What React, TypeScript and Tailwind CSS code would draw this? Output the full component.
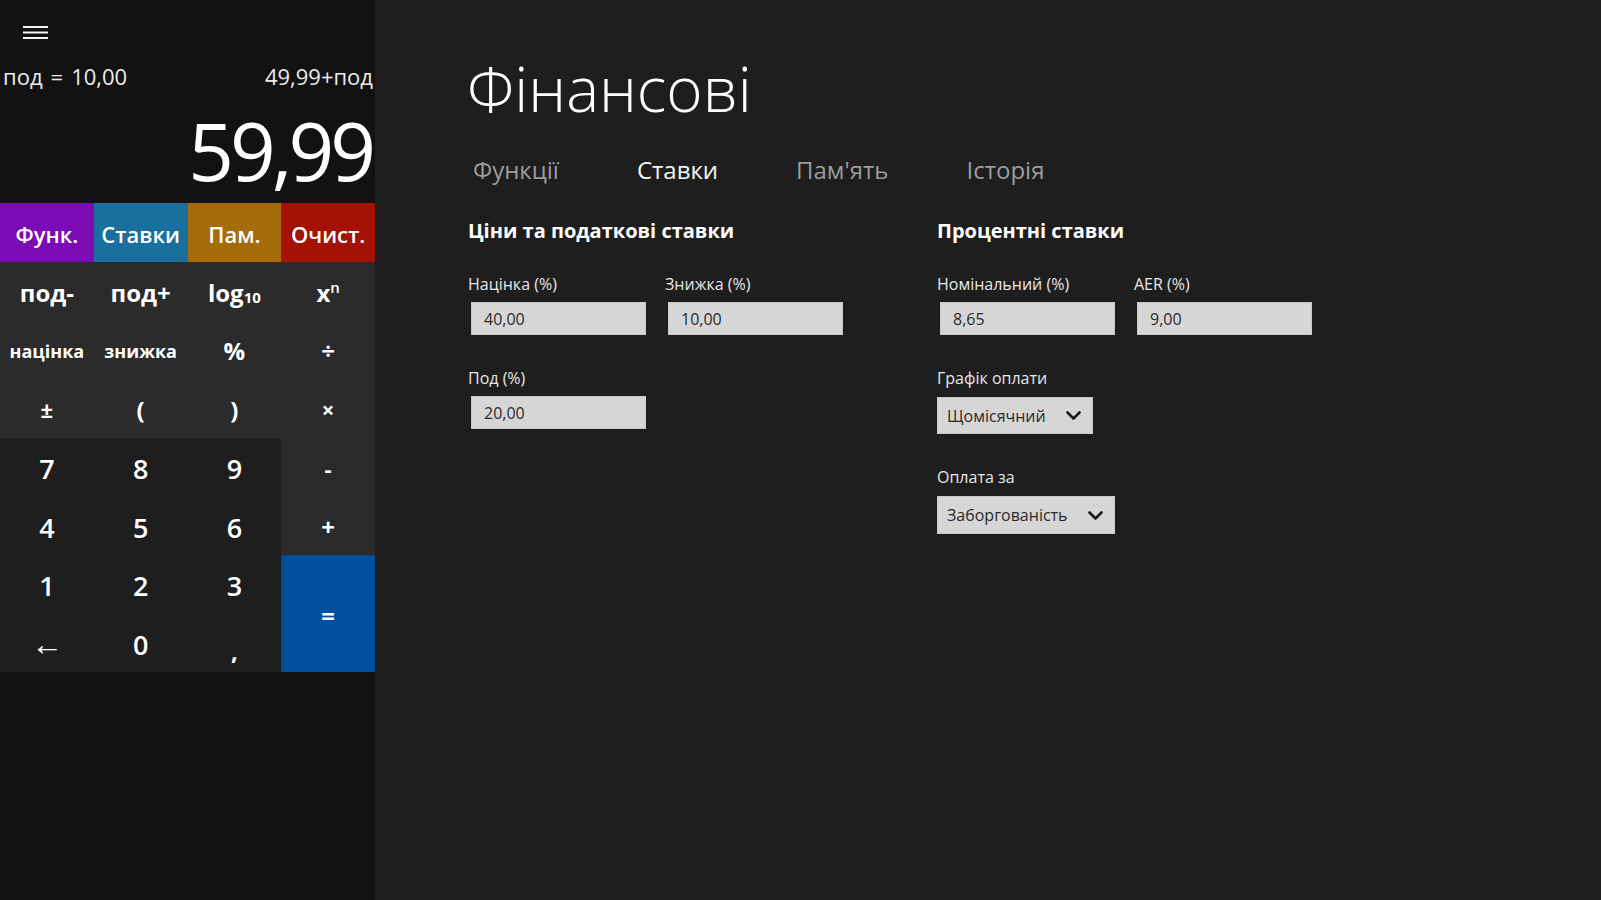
import React from 'react';

function Key({ children, className = '' }: { children: React.ReactNode; className?: string }) {
  return <div className={`flex items-center justify-center text-white ${className}`}>{children}</div>;
}

function Field({ label, value }: { label: string; value: string }) {
  return (
    <div>
      <p className="text-[16px] leading-[22px] text-[#e8e8e8]">{label}</p>
      <div className="mt-[7px] ml-[3px] flex h-[33px] w-[175px] items-center border border-[#c8c8c8] bg-[#d6d6d6] pl-[12px] text-[16px] text-[#2b2b2b]">
        {value}
      </div>
    </div>
  );
}

function Dropdown({ label, value, h }: { label: string; value: string; h: string }) {
  return (
    <div className="mt-[32px]">
      <p className="text-[16px] leading-[22px] text-[#e8e8e8]">{label}</p>
      <div className={`mt-[8px] inline-flex items-center gap-[20px] border border-[#c8c8c8] bg-[#d6d6d6] pl-[9px] pr-[11px] text-[16px] text-[#2b2b2b] ${h}`}>
        <span>{value}</span>
        <svg width="15" height="9" viewBox="0 0 15 9">
          <polyline points="1.5,1.5 7.5,7.5 13.5,1.5" fill="none" stroke="#1a1a1a" strokeWidth="2.6" strokeLinecap="round" strokeLinejoin="round" />
        </svg>
      </div>
    </div>
  );
}

export default function App() {
  return (
    <div className="flex h-[900px] w-full font-['Open_Sans','Noto_Sans',sans-serif]">
      <aside className="flex w-[375px] shrink-0 flex-col bg-[#121212]">
        <div className="h-[203px]">
          <div className="pl-[23px] pt-[25px]">
            <svg width="25" height="14" viewBox="0 0 25 14">
              <rect x="0" y="1" width="25" height="2" fill="#f2f2f2" />
              <rect x="0" y="6.5" width="25" height="2" fill="#f2f2f2" />
              <rect x="0" y="12" width="25" height="2" fill="#f2f2f2" />
            </svg>
          </div>
          <div className="mt-[22px] flex justify-between pl-[3px] pr-[2px] text-[22px] leading-[30px] text-[#ececec]">
            <span className="flex gap-[8px]">
              <span>под</span>
              <span>=</span>
              <span>10,00</span>
            </span>
            <span>49,99+под</span>
          </div>
          <div className="mt-[19px] pr-[3px] text-right text-[80px] font-normal leading-[80px] tracking-[-0.05em] text-white">
            59,99
          </div>
        </div>

        <div className="grid h-[59px] grid-cols-4 text-[22px] font-semibold">
          <Key className="bg-[#7b0cb4] pt-[3px]">Функ.</Key>
          <Key className="bg-[#19709e] pt-[3px]">Ставки</Key>
          <Key className="bg-[#a66c0c] pt-[3px]">Пам.</Key>
          <Key className="bg-[#a31204] pt-[3px]">Очист.</Key>
        </div>

        <div className="grid h-[410px] grid-cols-4 grid-rows-7 font-bold">
          <Key className="bg-[#2b2b2b] pt-[3px] text-[24px]">под-</Key>
          <Key className="bg-[#2b2b2b] pt-[3px] text-[24px]">под+</Key>
          <Key className="bg-[#2b2b2b] pt-[3px] text-[24px]">
            log<span className="mt-[8px] text-[15px]">10</span>
          </Key>
          <Key className="bg-[#2b2b2b] pt-[3px] text-[24px]">
            x<span className="-mt-[12px] text-[15px] font-semibold">n</span>
          </Key>

          <Key className="bg-[#2b2b2b] pt-[3px] text-[18px]">націнка</Key>
          <Key className="bg-[#2b2b2b] pt-[3px] text-[18px]">знижка</Key>
          <Key className="bg-[#2b2b2b] pt-[3px] text-[24px]">%</Key>
          <Key className="bg-[#2b2b2b] pt-[3px] text-[24px]">÷</Key>

          <Key className="bg-[#2b2b2b] pt-[3px] text-[22px]">±</Key>
          <Key className="bg-[#2b2b2b] pt-[3px] text-[24px]">(</Key>
          <Key className="bg-[#2b2b2b] pt-[3px] text-[24px]">)</Key>
          <Key className="bg-[#2b2b2b] pt-[3px] text-[22px]">×</Key>

          <Key className="bg-[#1e1e1e] pt-[5px] text-[27px] font-semibold">7</Key>
          <Key className="bg-[#1e1e1e] pt-[5px] text-[27px] font-semibold">8</Key>
          <Key className="bg-[#1e1e1e] pt-[5px] text-[27px] font-semibold">9</Key>
          <Key className="bg-[#2b2b2b] pt-[3px] text-[22px]">-</Key>

          <Key className="bg-[#1e1e1e] pt-[5px] text-[27px] font-semibold">4</Key>
          <Key className="bg-[#1e1e1e] pt-[5px] text-[27px] font-semibold">5</Key>
          <Key className="bg-[#1e1e1e] pt-[5px] text-[27px] font-semibold">6</Key>
          <Key className="bg-[#2b2b2b] pt-[3px] text-[24px]">+</Key>

          <Key className="bg-[#1e1e1e] pt-[5px] text-[27px] font-semibold">1</Key>
          <Key className="bg-[#1e1e1e] pt-[5px] text-[27px] font-semibold">2</Key>
          <Key className="bg-[#1e1e1e] pt-[5px] text-[27px] font-semibold">3</Key>
          <Key className="row-span-2 bg-[#004f9d] pt-[6px] text-[24px]">=</Key>

          <Key className="bg-[#1e1e1e] text-[32px] font-normal">←</Key>
          <Key className="bg-[#1e1e1e] pt-[5px] text-[27px] font-semibold">0</Key>
          <Key className="bg-[#1e1e1e] pt-[16px] text-[24px]">,</Key>
        </div>
      </aside>

      <main className="flex-1 bg-[#1e1e1e] pl-[93px]">
        <h1 className="mt-[57px] -ml-[1px] text-[62px] font-light leading-[62px] text-white">Фінансові</h1>

        <nav className="ml-[5px] mt-[35px] flex gap-[78px] text-[24px] leading-[32px] text-[#9c9c9c]">
          <span>Функції</span>
          <span className="text-[#f4f4f4]">Ставки</span>
          <span>Пам'ять</span>
          <span>Історія</span>
        </nav>

        <div className="mt-[31px] flex">
          <section className="w-[469px]">
            <h2 className="text-[20px] font-bold leading-[28px] text-white">Ціни та податкові ставки</h2>
            <div className="mt-[28px] flex gap-[19px]">
              <Field label="Націнка (%)" value="40,00" />
              <Field label="Знижка (%)" value="10,00" />
            </div>
            <div className="mt-[32px]">
              <Field label="Под (%)" value="20,00" />
            </div>
          </section>

          <section>
            <h2 className="text-[20px] font-bold leading-[28px] text-white">Процентні ставки</h2>
            <div className="mt-[28px] flex gap-[19px]">
              <Field label="Номінальний (%)" value="8,65" />
              <Field label="AER (%)" value="9,00" />
            </div>
            <Dropdown label="Графік оплати" value="Щомісячний" h="h-[37px]" />
            <Dropdown label="Оплата за" value="Заборгованість" h="h-[38px]" />
          </section>
        </div>
      </main>
    </div>
  );
}
